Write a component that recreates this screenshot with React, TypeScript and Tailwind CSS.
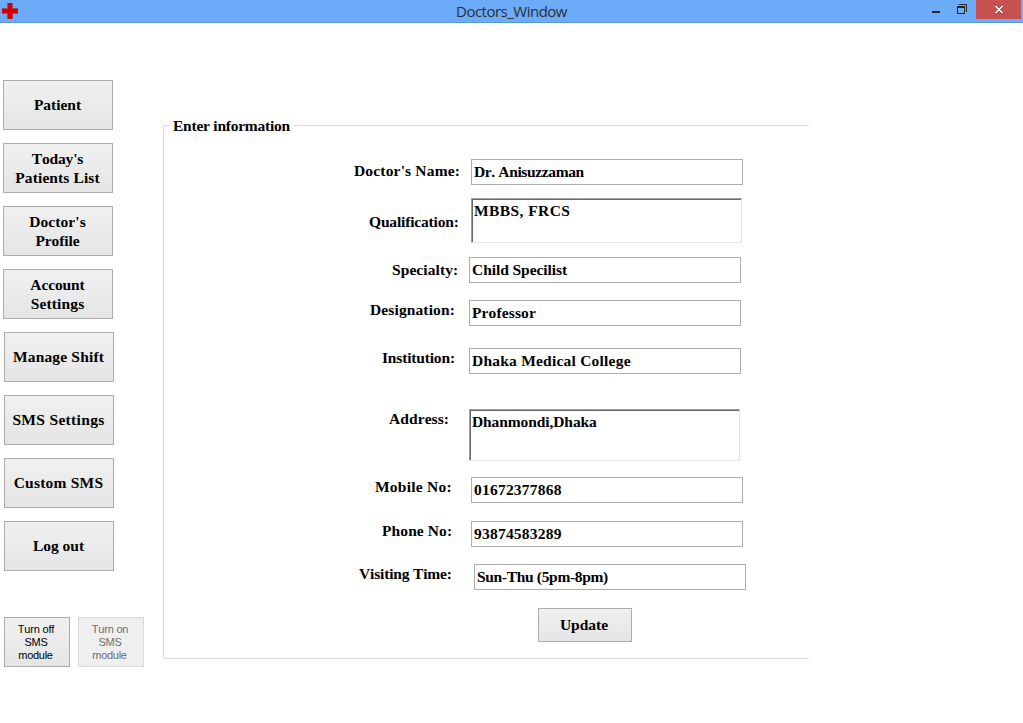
type MenuItem = { lines: { text: string; spacing: string }[]; offset: string };

const menu: MenuItem[] = [
  { lines: [{ text: "Patient", spacing: "tracking-[-0.02px]" }], offset: "ml-[3px]" },
  {
    lines: [
      { text: "Today's", spacing: "tracking-[-0.15px]" },
      { text: "Patients List", spacing: "tracking-[0.1px]" },
    ],
    offset: "ml-[3px]",
  },
  {
    lines: [
      { text: "Doctor's", spacing: "tracking-[0.09px]" },
      { text: "Profile", spacing: "tracking-[-0.09px]" },
    ],
    offset: "ml-[3px]",
  },
  {
    lines: [
      { text: "Account", spacing: "tracking-[-0.12px]" },
      { text: "Settings", spacing: "tracking-[0.15px]" },
    ],
    offset: "ml-[3px]",
  },
  { lines: [{ text: "Manage Shift", spacing: "tracking-[0.17px]" }], offset: "ml-[4px]" },
  { lines: [{ text: "SMS Settings", spacing: "tracking-[0.33px]" }], offset: "ml-[4px]" },
  { lines: [{ text: "Custom SMS", spacing: "tracking-[0.22px]" }], offset: "ml-[4px]" },
  { lines: [{ text: "Log out", spacing: "tracking-[0px]" }], offset: "ml-[4px]" },
];

type Field = {
  label: string;
  labelClass: string;
  value: string;
  valueClass: string;
  row: string;
  multiline?: boolean;
};

const fields: Field[] = [
  {
    label: "Doctor's Name:",
    labelClass: "w-[307px] pl-[190px] pt-[3px] tracking-[0.17px]",
    value: "Dr. Anisuzzaman",
    valueClass: "w-[272px] h-[26px] tracking-[-0.37px]",
    row: "mt-[24px]",
  },
  {
    label: "Qualification:",
    labelClass: "w-[307px] pl-[205px] pt-[15px] tracking-[-0.17px]",
    value: "MBBS, FRCS",
    valueClass: "w-[271px] h-[45px] tracking-[0.42px]",
    row: "mt-[13px]",
    multiline: true,
  },
  {
    label: "Specialty:",
    labelClass: "w-[305px] pl-[228px] pt-[4px] tracking-[0.08px]",
    value: "Child Specilist",
    valueClass: "w-[272px] h-[26px] tracking-[-0.06px]",
    row: "mt-[14px]",
  },
  {
    label: "Designation:",
    labelClass: "w-[305px] pl-[206px] pt-[1px] tracking-[0.12px]",
    value: "Professor",
    valueClass: "w-[272px] h-[26px] tracking-[0.13px]",
    row: "mt-[17px]",
  },
  {
    label: "Institution:",
    labelClass: "w-[305px] pl-[218px] pt-[1px] tracking-[-0.17px]",
    value: "Dhaka Medical College",
    valueClass: "w-[272px] h-[26px] tracking-[0.22px]",
    row: "mt-[22px]",
  },
  {
    label: "Address:",
    labelClass: "w-[305px] pl-[225px] pt-[1px] tracking-[0.08px]",
    value: "Dhanmondi,Dhaka",
    valueClass: "w-[271px] h-[52px] tracking-[-0.1px]",
    row: "mt-[35px]",
    multiline: true,
  },
  {
    label: "Mobile No:",
    labelClass: "w-[307px] pl-[211px] pt-[1px] tracking-[0.23px]",
    value: "01672377868",
    valueClass: "w-[272px] h-[26px] tracking-[0.22px]",
    row: "mt-[16px]",
  },
  {
    label: "Phone No:",
    labelClass: "w-[307px] pl-[218px] pt-[1px] tracking-[0.1px]",
    value: "93874583289",
    valueClass: "w-[272px] h-[26px] tracking-[0.22px]",
    row: "mt-[18px]",
  },
  {
    label: "Visiting Time:",
    labelClass: "w-[310px] pl-[195px] pt-[1px] tracking-[-0.17px]",
    value: "Sun-Thu (5pm-8pm)",
    valueClass: "w-[272px] h-[26px] tracking-[-0.33px]",
    row: "mt-[17px]",
  },
];

const buttonFace = "border border-[#acacac] bg-linear-to-b from-[#f0f0f0] to-[#e5e5e5]";

function TitleBar() {
  return (
    <header className="flex h-[23px] shrink-0 items-start border-b border-[#5a97d9] bg-[#6babf7]">
      <svg className="mt-[3px] ml-[2px] h-4 w-4 shrink-0" viewBox="0 0 16 16" shapeRendering="crispEdges">
        <path d="M5 0h6v5h5v6h-5v5H5v-5H0V5h5z" fill="#a8406c" />
        <path d="M6 0h4v6h6v4h-6v6H6v-6H0V6h6z" fill="#d40000" />
      </svg>
      <h1 className="flex-1 pl-[438px] font-['Open_Sans',sans-serif] text-[15px] leading-[22px] font-normal tracking-[-0.5px] text-[#2b2f36]">
        Doctors_Window
      </h1>
      <svg className="mr-[9px] h-[19px] w-[35px] shrink-0" viewBox="0 0 35 19" shapeRendering="crispEdges">
        <path d="M0 11h8v2H0z" fill="#262626" />
        <path
          d="M25 6h8v8h-8zM26 8v5h6V8zM27 4h8v8h-1V5h-7z"
          fill="#262626"
          fillRule="evenodd"
        />
      </svg>
      <button className="mr-[2px] flex h-[19px] w-[45px] items-start justify-center bg-[#c75050] pt-[6px]">
        <svg className="h-[7px] w-[8px]" viewBox="0 0 8 7" shapeRendering="crispEdges">
          <path
            d="M0 0h2v1h1v1h2V1h1V0h2v1H7v1H6v1H5v1h1v1h1v1h1v1H6V6H5V5H3v1H2v1H0V6h1V5h1V4h1V3H2V2H1V1H0z"
            fill="#fff"
          />
        </svg>
      </button>
    </header>
  );
}

function Sidebar() {
  return (
    <nav className="flex w-[163px] shrink-0 flex-col gap-[13px] pt-[57px]">
      {menu.map((item) => (
        <button
          key={item.lines[0].text}
          className={`flex h-[50px] w-[110px] flex-col items-center justify-center pr-[1px] ${buttonFace} ${item.offset}`}
        >
          {item.lines.map((line) => (
            <span
              key={line.text}
              className={`whitespace-nowrap ${item.lines.length > 1 ? "leading-[19px]" : "leading-[18px]"} ${line.spacing}`}
            >
              {line.text}
            </span>
          ))}
        </button>
      ))}
      <div className="mt-[33px] ml-[4px] flex gap-[8px] font-['Liberation_Sans',Arial,sans-serif] text-[11px] leading-[13px] font-normal">
        <button className={`h-[50px] w-[66px] pr-[2px] ${buttonFace}`}>
          <span className="block tracking-[-0.2px]">Turn off</span>
          <span className="block tracking-[-0.3px]">SMS</span>
          <span className="block pr-[1px] tracking-[-0.3px]">module</span>
        </button>
        <button className="h-[50px] w-[66px] border border-[#d9d9d9] bg-[#efefef] pr-[2px] text-[#6d6d6d]">
          <span className="block tracking-[-0.2px]">Turn on</span>
          <span className="block tracking-[-0.3px]">SMS</span>
          <span className="block pr-[1px] tracking-[-0.3px]">module</span>
        </button>
      </div>
    </nav>
  );
}

function FieldRow({ field }: { field: Field }) {
  return (
    <div className={`flex items-start ${field.row}`}>
      <label className={`shrink-0 whitespace-nowrap ${field.labelClass}`}>{field.label}</label>
      {field.multiline ? (
        <div className={`border-t border-r border-b border-l border-t-[#a0a0a0] border-r-[#e3e3e3] border-b-[#e3e3e3] border-l-[#a0a0a0] ${field.valueClass}`}>
          <div className="h-full border-t border-l border-[#696969] pt-[2px] pl-[1px]">{field.value}</div>
        </div>
      ) : (
        <div className={`border border-[#abadb3] pt-[3px] pl-[2px] ${field.valueClass}`}>{field.value}</div>
      )}
    </div>
  );
}

function InformationForm() {
  return (
    <main className="flex w-[646px] flex-col pt-[94px]">
      <div className="flex h-[18px] items-start">
        <div className="mt-[8px] h-[10px] w-[7px] border-t border-l border-[#dcdcdc]" />
        <h2 className="w-[123px] pl-[3px] tracking-[-0.24px] whitespace-nowrap">Enter information</h2>
        <div className="mt-[8px] flex-1 border-t border-[#dcdcdc]" />
      </div>
      <div className="flex flex-col border-b border-l border-[#dcdcdc] pb-[16px]">
        {fields.map((field) => (
          <FieldRow key={field.label} field={field} />
        ))}
        <button className={`mt-[18px] ml-[374px] h-[34px] w-[94px] pr-[2px] tracking-[0px] ${buttonFace}`}>
          Update
        </button>
      </div>
    </main>
  );
}

export default function App() {
  return (
    <div className="flex h-[723px] w-[1023px] flex-col overflow-hidden bg-white font-['Liberation_Serif','Times_New_Roman',serif] text-[15.5px] leading-[18px] font-bold text-black [font-kerning:none] [font-variant-ligatures:none]">
      <TitleBar />
      <div className="flex flex-1 items-start">
        <Sidebar />
        <InformationForm />
      </div>
    </div>
  );
}
